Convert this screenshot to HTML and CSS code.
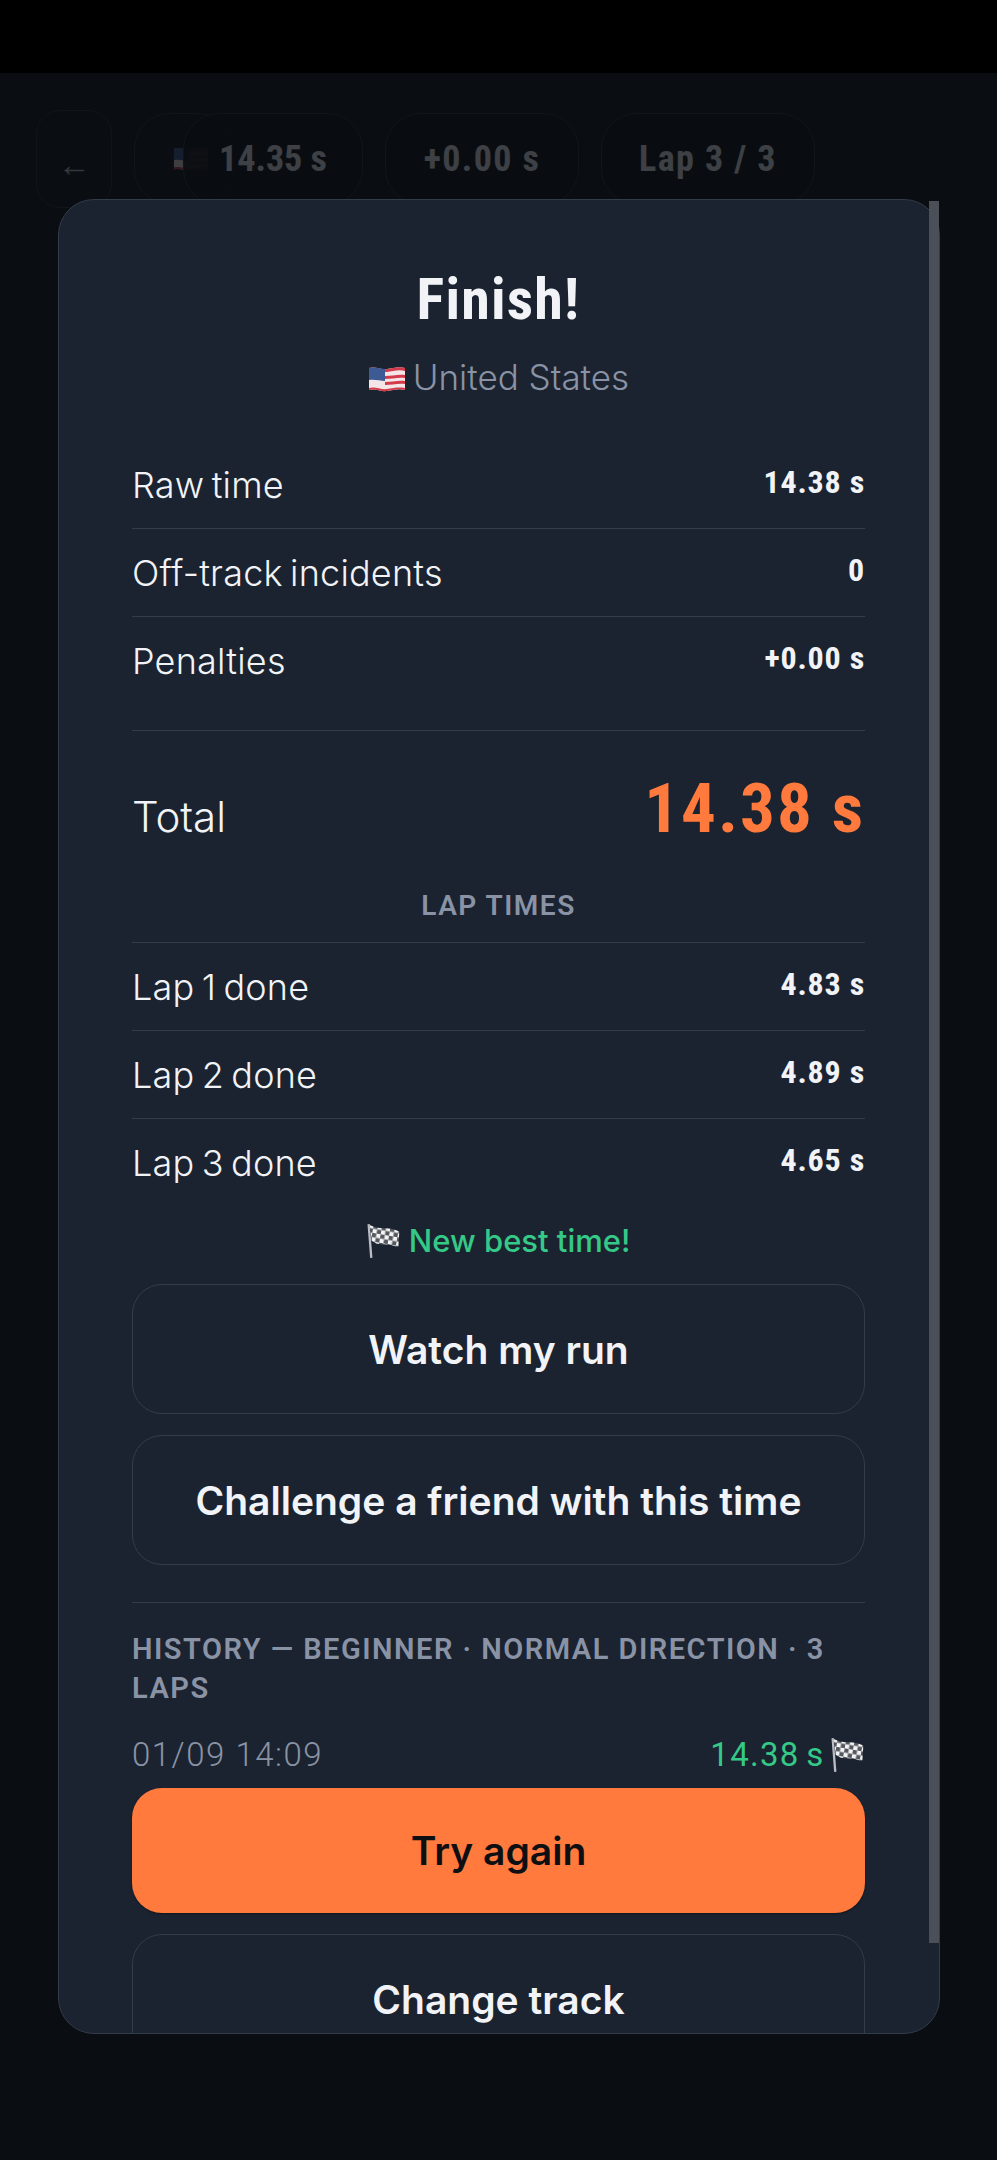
FILE: index.html
```html
<!DOCTYPE html>
<html lang="en">
<head>
<meta charset="utf-8">
<title>Finish</title>
<link rel="stylesheet" href="styles.css">
</head>
<body>
<svg class="defs" width="0" height="0" aria-hidden="true">
  <defs>
    <pattern id="checks" width="8" height="8" patternUnits="userSpaceOnUse" patternTransform="rotate(10)">
      <rect width="8" height="8" fill="#f2f3f5"/>
      <rect width="4" height="4" fill="#55585e"/>
      <rect x="4" y="4" width="4" height="4" fill="#55585e"/>
    </pattern>
    <symbol id="us" viewBox="0 0 38 28">
      <path d="M1 3c6-2 12 2 18 1s12-3 18-1v22c-6-2-12 0-18 1s-12-3-18-1z" fill="#f4e6e8"/>
      <path d="M1 3c6-2 12 2 18 1s12-3 18-1v3c-6-2-12 0-18 1S7 4 1 6zM17 11c7 0 13-2 20-1v3c-7-1-13 1-20 1zM17 17c7 0 13-2 20-1v3c-7-1-13 1-20 1zM1 23c6-2 12 2 18 1s12-2 18-1v2c-6-2-12 0-18 1s-12-3-18-1z" fill="#d33a4a"/>
      <path d="M1 3c5-1.500 11 .5 16 1v12c-5-.5-11-2-16-1z" fill="#3c5a94"/>
    </symbol>
    <symbol id="flag" viewBox="2 0 31 34">
      <path d="M3 1l2.500 32" stroke="#b9bcc2" stroke-width="2.200" fill="none"/>
      <path d="M4 2c6 3 10 3 15 3 4 0 8 1 13 3l-1 15c-5-2-9-3-14-3-4 0-7 0-11-3z" fill="url(#checks)"/>
    </symbol>
  </defs>
</svg>

<div class="statusbar"></div>

<main class="screen">
  <header class="hud">
    <button class="hud-back">←</button>
    <div class="hud-flag"><svg class="hud-flag-icon"><use href="#us"/></svg></div>
    <div class="hud-pill hud-time">14.35 s</div>
    <div class="hud-pill hud-pen">+0.00 s</div>
    <div class="hud-pill hud-lap">Lap 3 / 3</div>
  </header>

  <section class="modal">
    <div class="modal-inner">
      <h1 class="title">Finish!</h1>
      <p class="country"><svg class="flag-us"><use href="#us"/></svg> United States</p>

      <div class="rows">
        <div class="row"><span>Raw time</span><b>14.38 s</b></div>
        <div class="row"><span>Off-track incidents</span><b>0</b></div>
        <div class="row row-last"><span>Penalties</span><b>+0.00 s</b></div>
      </div>

      <div class="total"><span>Total</span><b>14.38 s</b></div>

      <h2 class="laps-title">LAP TIMES</h2>
      <div class="rows laps">
        <div class="row"><span>Lap 1 done</span><b>4.83 s</b></div>
        <div class="row"><span>Lap 2 done</span><b>4.89 s</b></div>
        <div class="row row-last"><span>Lap 3 done</span><b>4.65 s</b></div>
      </div>

      <p class="best"><svg class="flag-chk"><use href="#flag"/></svg> New best time!</p>

      <button class="btn btn-first">Watch my run</button>
      <button class="btn btn-gap">Challenge a friend with this time</button>

      <div class="history">
        <h3 class="history-title">HISTORY — BEGINNER · NORMAL DIRECTION · 3 LAPS</h3>
        <div class="history-row">
          <span class="history-date">01/09 14:09</span>
          <span class="history-time">14.38 s <svg class="flag-chk"><use href="#flag"/></svg></span>
        </div>
      </div>

      <button class="btn-primary">Try again</button>
      <button class="btn btn-gap">Change track</button>
    </div>
    <div class="scrollthumb"></div>
  </section>
</main>
</body>
</html>
```
FILE: styles.css
```css
* { box-sizing: border-box; }
html, body { margin: 0; padding: 0; }
body {
  width: 997px;
  height: 2160px;
  background: #000;
  font-family: "Inter", "Liberation Sans", sans-serif;
  overflow: hidden;
}
.defs { display: block; height: 0; }
.statusbar { height: 73px; background: #000; }
.screen {
  position: relative;
  height: 2087px;
  background: #0a0d11;
}
.hud {
  display: flex;
  align-items: center;
  gap: 22px;
  padding: 37px 0 0 36px;
  opacity: .22;
}
.hud-back {
  width: 76px;
  height: 98px;
  border: 1px solid #2a303a;
  border-radius: 24px;
  background: transparent;
  color: #c9ced6;
  font-size: 33px;
  line-height: 32px;
  padding: 12px 0 0;
  font-family: "Liberation Sans", sans-serif;
}
.hud-flag {
  width: 100px;
  height: 92px;
  border: 1px solid #2a303a;
  border-radius: 36px;
  display: flex;
  align-items: center;
  padding-left: 38px;
}
.hud-flag-icon { width: 36px; height: 30px; }
.hud-pill {
  height: 92px;
  border: 1px solid #2a303a;
  border-radius: 36px;
  background: rgba(10, 13, 17, .92);
  color: #f1f3f7;
  font-family: "Roboto", "Liberation Sans", sans-serif;
  font-stretch: 75%;
  font-weight: 700;
  font-size: 36px;
  letter-spacing: 1.400px;
  display: flex;
  align-items: center;
  justify-content: center;
}
.hud-time { width: 180px; margin-left: -73px; letter-spacing: 0; }
.hud-pen { width: 194px; }
.hud-lap { width: 214px; }

.modal {
  position: absolute;
  left: 58px;
  top: 126px;
  width: 882px;
  height: 1835px;
}
.modal-inner {
  height: 100%;
  overflow: hidden;
  padding: 67px 74px 0 73px;
  color: #f1f3f7;
  background: #1b2330;
  border: 1px solid #333c4a;
  border-radius: 36px;
}
.scrollthumb {
  position: absolute;
  right: 1px;
  top: 2px;
  width: 10px;
  height: 1742px;
  background: #4b5058;
}
.title {
  margin: 0;
  font-family: "Roboto", "Liberation Sans", sans-serif;
  font-stretch: 75%;
  font-size: 58px;
  line-height: 64px;
  font-weight: 700;
  letter-spacing: 1.200px;
  text-align: center;
}
.country {
  margin: 24px 0 0;
  font-size: 35px;
  line-height: 44px;
  font-weight: 300;
  color: #8a93a5;
  text-align: center;
}
.flag-us { width: 38px; height: 28px; vertical-align: -3px; margin-right: -3px; }
.rows { margin-top: 42px; }
.row {
  height: 88px;
  display: flex;
  justify-content: space-between;
  align-items: center;
  border-bottom: 1px solid #333c4a;
  font-size: 36px;
  font-weight: 300;
  letter-spacing: .2px;
  word-spacing: -3px;
}
.row b {
  font-family: "Roboto", "Liberation Sans", sans-serif;
  font-stretch: 75%;
  font-size: 32px;
  font-weight: 700;
  margin-top: -6px;
  letter-spacing: .8px;
  word-spacing: 0;
}
.row-last { border-bottom: 0; }
.total {
  margin-top: 25px;
  border-top: 1px solid #333c4a;
  height: 158px;
  padding-top: 38px;
  display: flex;
  justify-content: space-between;
  align-items: baseline;
  font-size: 42px;
  font-weight: 300;
}
.total b {
  font-family: "Roboto", "Liberation Sans", sans-serif;
  font-stretch: 75%;
  font-size: 69px;
  line-height: 80px;
  font-weight: 700;
  letter-spacing: 2px;
  color: #ff7a3c;
}
.laps-title {
  margin: 0;
  font-family: "Roboto", "Liberation Sans", sans-serif;
  font-size: 28px;
  line-height: 36px;
  font-weight: 600;
  color: #8a93a5;
  text-align: center;
  letter-spacing: 1.500px;
}
.laps { margin-top: 18px; border-top: 1px solid #333c4a; }
.best {
  margin: 12px 0 0;
  font-size: 31px;
  line-height: 44px;
  color: #35c987;
  font-weight: 450;
  text-align: center;
}
.flag-chk { width: 34px; height: 36px; vertical-align: -7px; }
.btn, .btn-primary {
  display: block;
  width: 100%;
  font: 600 39px "Inter", "Liberation Sans", sans-serif;
  border-radius: 30px;
}
.btn {
  height: 130px;
  background: transparent;
  border: 1px solid #333c4a;
  color: #f1f3f7;
}
.btn-first { margin-top: 21px; }
.btn-gap { margin-top: 21px; }
.history { margin-top: 37px; border-top: 1px solid #333c4a; padding-top: 27px; }
.history-title {
  margin: 0;
  font-family: "Roboto", "Liberation Sans", sans-serif;
  font-size: 29px;
  line-height: 39px;
  font-weight: 600;
  letter-spacing: 1.500px;
  color: #8a93a5;
}
.history-row {
  margin-top: 24px;
  display: flex;
  justify-content: space-between;
  align-items: center;
  font-family: "Roboto", "Liberation Sans", sans-serif;
  font-size: 33px;
  height: 44px;
}
.history-date { color: #8a93a5; font-weight: 300; letter-spacing: 1.500px; }
.history-time { color: #35c987; font-weight: 400; letter-spacing: 1.300px; word-spacing: -3px; }
.btn-primary {
  height: 125px;
  margin-top: 12px;
  background: #ff7a3c;
  border: 0;
  color: #0d0f12;
  box-shadow: 0 1px 2px rgba(0, 0, 0, .4);
}
```
